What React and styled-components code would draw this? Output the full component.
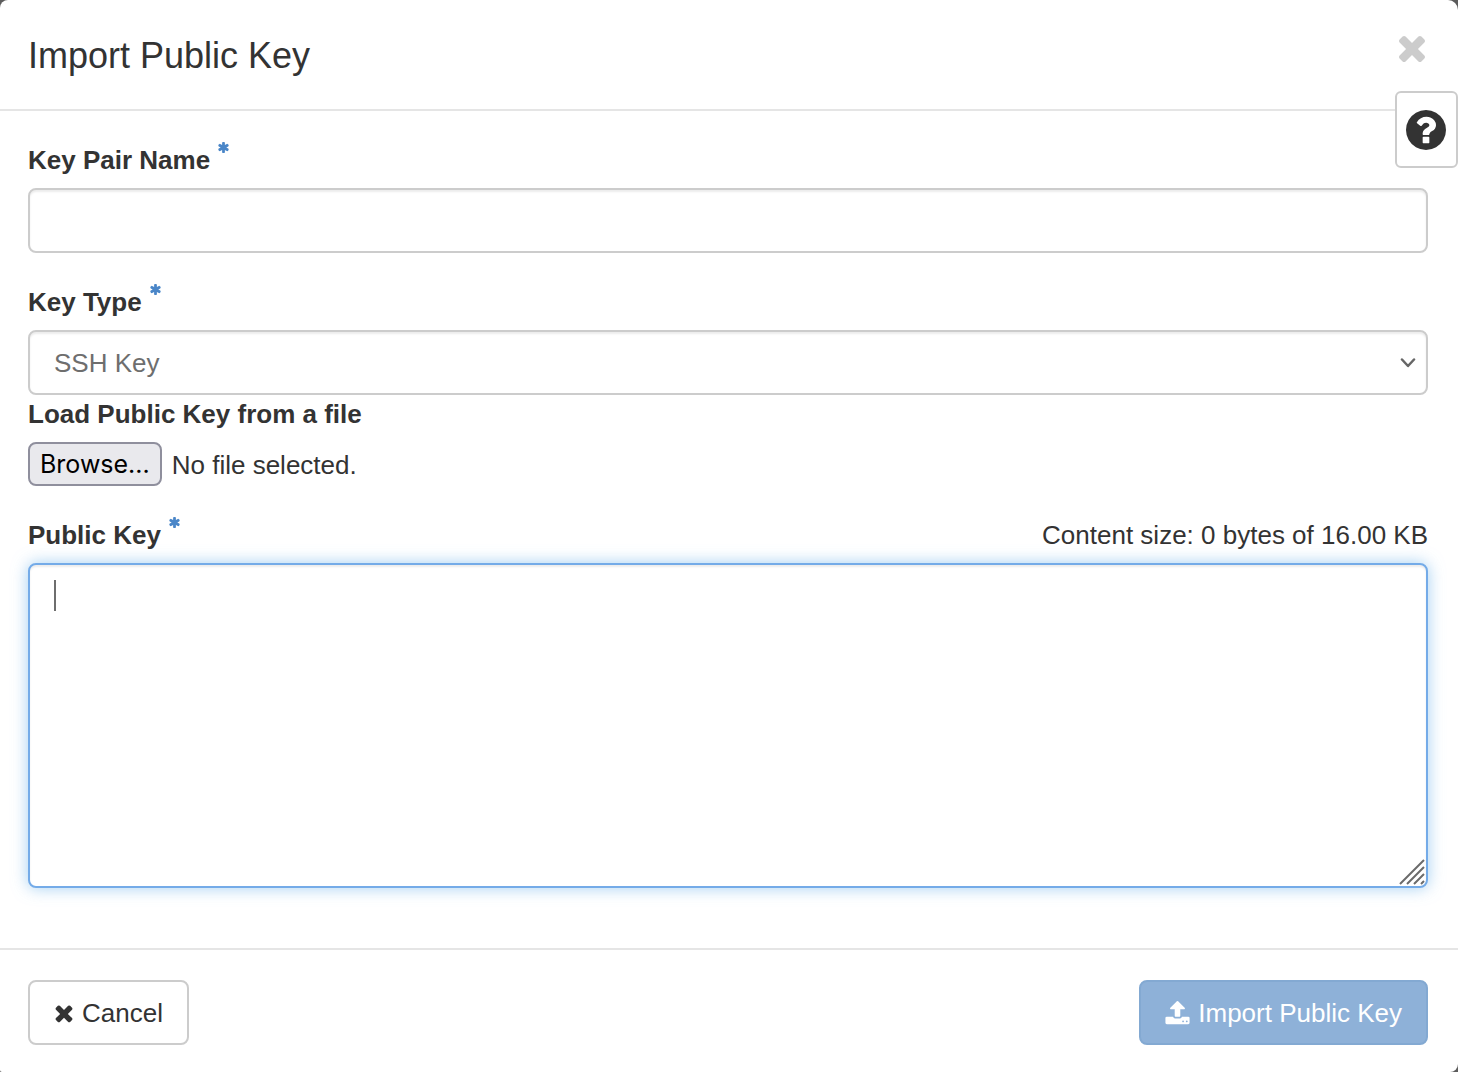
import { useState } from "react";
import styled, { createGlobalStyle } from "styled-components";

const icons = {
  times: {
    viewBox: "192 0 1408 1792",
    d: "M1490 1322q0 40-28 68l-136 136q-28 28-68 28t-68-28l-294-294-294 294q-28 28-68 28t-68-28l-136-136q-28-28-28-68t28-68l294-294-294-294q-28-28-28-68t28-68l136-136q28-28 68-28t68 28l294 294 294-294q28-28 68-28t68 28l136 136q28 28 28 68t-28 68l-294 294 294 294q28 28 28 68z",
  },
  close: {
    viewBox: "302 366 1188 1188",
    d: "M1490 1322q0 40-28 68l-136 136q-28 28-68 28t-68-28l-294-294-294 294q-28 28-68 28t-68-28l-136-136q-28-28-28-68t28-68l294-294-294-294q-28-28-28-68t28-68l136-136q28-28 68-28t68 28l294 294 294-294q28-28 68-28t68 28l136 136q28 28 28 68t-28 68l-294 294 294 294q28 28 28 68z",
  },
  upload: {
    viewBox: "64 0 1664 1792",
    d: "M1344 1472q0-26-19-45t-45-19-45 19-19 45 19 45 45 19 45-19 19-45zm256 0q0-26-19-45t-45-19-45 19-19 45 19 45 45 19 45-19 19-45zm128-224v320q0 40-28 68t-68 28h-1472q-40 0-68-28t-28-68v-320q0-40 28-68t68-28h427q21 56 70.5 92t110.5 36h256q61 0 110.5-36t70.5-92h427q40 0 68 28t28 68zm-325-648q-17 40-59 40h-256v448q0 26-19 45t-45 19h-256q-26 0-45-19t-19-45v-448h-256q-42 0-59-40-17-39 14-69l448-448q18-19 45-19t45 19l448 448q31 30 14 69z",
  },
  question: {
    viewBox: "128 128 1536 1536",
    d: "M1024 1376v-192q0-14-9-23t-23-9h-192q-14 0-23 9t-9 23v192q0 14 9 23t23 9h192q14 0 23-9t9-23zm256-672q0-88-55.5-163t-138.5-116-170-41q-243 0-371 213-15 24 8 42l132 100q7 6 19 6 16 0 25-12 53-68 86-92 34-24 86-24 48 0 85.5 26t37.5 59q0 38-20 61t-68 45q-63 28-115.5 86.5t-52.5 125.5v36q0 14 9 23t23 9h192q14 0 23-9t9-23q0-19 21.5-49.5t54.5-49.5q32-18 49-28.5t46-35 44.5-48 28-60.5 12.5-81zm384 192q0 209-103 385.5t-279.5 279.5-385.5 103-385.5-103-279.5-279.5-103-385.5 103-385.5 279.5-279.5 385.5-103 385.5 103 279.5 279.5 103 385.5z",
  },
  asterisk: {
    viewBox: "0 0 1792 1792",
    d: "M1546 1050q46 26 59.5 77.5t-12.5 97.5l-64 110q-26 46-77.5 59.5t-97.5-12.5l-266-153v307q0 52-38 90t-90 38h-128q-52 0-90-38t-38-90v-307l-266 153q-46 26-97.5 12.5t-77.5-59.5l-64-110q-26-46-12.5-97.5t59.5-77.5l266-154-266-154q-46-26-59.5-77.5t12.5-97.5l64-110q26-46 77.5-59.5t97.5 12.5l266 153v-307q0-52 38-90t90-38h128q52 0 90 38t38 90v307l266-153q46-26 97.5-12.5t77.5 59.5l64 110q26 46 12.5 97.5t-59.5 77.5l-266 154z",
  },
};

function Icon({ name, width, height }) {
  return (
    <svg
      width={width}
      height={height || width}
      viewBox={icons[name].viewBox}
      fill="currentColor"
      aria-hidden="true"
    >
      <path d={icons[name].d} />
    </svg>
  );
}

function RequiredLabel({ htmlFor, children }) {
  return (
    <Label htmlFor={htmlFor}>
      {children}
      <Required>
        <Icon name="asterisk" width={13} />
      </Required>
    </Label>
  );
}

export default function App() {
  const [name, setName] = useState("");
  const [publicKey, setPublicKey] = useState("");
  const [fileName, setFileName] = useState("");

  const loadFile = (e) => {
    const file = e.target.files[0];
    if (!file) return;
    setFileName(file.name);
    file.text().then(setPublicKey);
  };

  return (
    <>
      <GlobalStyle />
      <Modal role="dialog" aria-labelledby="modal-title">
        <Header>
          <Title id="modal-title">Import Public Key</Title>
          <CloseButton type="button" aria-label="Close">
            <Icon name="close" width={26} />
          </CloseButton>
        </Header>
        <HelpButton type="button" aria-label="Help">
          <Icon name="question" width={40} />
        </HelpButton>

        <Body>
          <Field>
            <RequiredLabel htmlFor="name">Key Pair Name</RequiredLabel>
            <Input
              id="name"
              type="text"
              value={name}
              onChange={(e) => setName(e.target.value)}
            />
          </Field>

          <Field $flush>
            <RequiredLabel htmlFor="key-type">Key Type</RequiredLabel>
            <SelectWrap>
              <Select id="key-type" defaultValue="ssh">
                <option value="ssh">SSH Key</option>
                <option value="x509">X509 Certificate</option>
              </Select>
              <Chevron width="16" height="10" viewBox="0 0 16 10" aria-hidden="true">
                <path d="M2 1.5l6 6.5 6-6.5" />
              </Chevron>
            </SelectWrap>
          </Field>

          <Field>
            <Label htmlFor="key-file">Load Public Key from a file</Label>
            <FileRow>
              <FileInput id="key-file" type="file" onChange={loadFile} />
              <Browse>Browse...</Browse>
              <FileName>{fileName || "No file selected."}</FileName>
            </FileRow>
          </Field>

          <Field>
            <LabelRow>
              <RequiredLabel htmlFor="public-key">Public Key</RequiredLabel>
              <span>Content size: {publicKey.length} bytes of 16.00 KB</span>
            </LabelRow>
            <TextareaWrap>
              <Textarea
                id="public-key"
                value={publicKey}
                onChange={(e) => setPublicKey(e.target.value)}
              />
              {!publicKey && <Caret />}
              <Grip width="26" height="26" viewBox="0 0 26 26" aria-hidden="true">
                <path d="M1 25L25 1M8 25L25 8M15 25L25 15M22 25L25 22" />
              </Grip>
            </TextareaWrap>
          </Field>
        </Body>

        <Footer>
          <Button type="button">
            <Icon name="times" width={20} height={26} />
            Cancel
          </Button>
          <Button type="submit" $primary disabled>
            <Icon name="upload" width={25} height={26} />
            Import Public Key
          </Button>
        </Footer>
      </Modal>
    </>
  );
}

const GlobalStyle = createGlobalStyle`
  * {
    box-sizing: border-box;
  }
  body {
    margin: 0;
    background: #5c5c5c;
    color: #333;
    font-family: "Helvetica Neue", Helvetica, "Liberation Sans", Arial, sans-serif;
    font-size: 26px;
    line-height: 39px;
  }
  input, select, textarea, button {
    font: inherit;
  }
  svg {
    display: block;
    flex: none;
  }
`;

const Modal = styled.div`
  position: relative;
  background: white;
  border-radius: 8px 10px 8px 2px;
`;

const Header = styled.header`
  display: flex;
  justify-content: space-between;
  align-items: flex-start;
  padding: 30px 30px 28px 28px;
  border-bottom: 2px solid #e5e5e5;
`;

const Title = styled.h3`
  margin: 0;
  font-size: 36px;
  font-weight: 500;
  line-height: 51px;
`;

const CloseButton = styled.button`
  padding: 0 3px 0 2px;
  margin-top: 6px;
  border: 0;
  background: none;
  color: #ccc;
  cursor: pointer;
`;

const HelpButton = styled.button`
  position: absolute;
  top: 91px;
  right: 0;
  padding: 17px 10px 16px 9px;
  background: white;
  color: #333;
  border: 2px solid #ccc;
  border-radius: 6px;
  cursor: pointer;
`;

const Body = styled.div`
  padding: 30px 30px 30px 28px;
`;

const Field = styled.div`
  margin-bottom: ${({ $flush }) => ($flush ? "0" : "30px")};
`;

const Label = styled.label`
  display: flex;
  align-items: flex-start;
  gap: 7px;
  margin-bottom: 8px;
  font-weight: bold;
`;

const LabelRow = styled.div`
  display: flex;
  justify-content: space-between;
`;

const Required = styled.span`
  color: #4a86c8;
`;

const Input = styled.input`
  display: block;
  width: 100%;
  height: 65px;
  padding: 12px 24px 10px;
  background: white;
  color: #6e6e6e;
  border: 2px solid #ccc;
  border-radius: 8px;
  outline: none;
  box-shadow: inset 0 2px 2px rgb(0 0 0 / 8%);
`;

const SelectWrap = styled.div`
  position: relative;
`;

const Select = styled(Input).attrs({ as: "select" })`
  appearance: none;
`;

const Chevron = styled.svg`
  position: absolute;
  right: 12px;
  top: 28px;
  fill: none;
  stroke: #666;
  stroke-width: 2.5;
  stroke-linecap: round;
  stroke-linejoin: round;
  pointer-events: none;
`;

const FileRow = styled.div`
  position: relative;
  display: flex;
  align-items: center;
  gap: 10px;
`;

const FileInput = styled.input`
  position: absolute;
  inset: 0;
  width: 100%;
  opacity: 0;
  cursor: pointer;
`;

const Browse = styled.span`
  padding: 1px 10px 0;
  background: #e9e9ed;
  color: black;
  border: 2px solid #8f8f9d;
  border-radius: 8px;
  font-family: Inter, sans-serif;
  font-size: 25px;
`;

const FileName = styled.span`
  padding-top: 2px;
`;

const TextareaWrap = styled.div`
  position: relative;
`;

const Textarea = styled(Input).attrs({ as: "textarea" })`
  height: 325px;
  border-color: #74abe8;
  resize: vertical;
  box-shadow: inset 0 2px 2px rgb(0 0 0 / 8%), 0 0 16px rgb(102 175 233 / 60%);
  &::-webkit-resizer {
    background: transparent;
  }
`;

const Caret = styled.span`
  position: absolute;
  left: 26px;
  top: 17px;
  width: 2px;
  height: 31px;
  background: #6e6e6e;
  pointer-events: none;
`;

const Grip = styled.svg`
  position: absolute;
  right: 3px;
  bottom: 3px;
  stroke: #6b6b6b;
  stroke-width: 2;
  pointer-events: none;
`;

const Footer = styled.footer`
  display: flex;
  justify-content: space-between;
  padding: 30px 30px 27px 28px;
  border-top: 2px solid #e5e5e5;
`;

const Button = styled.button`
  display: flex;
  align-items: center;
  gap: 8px;
  padding: 12px 24px 10px;
  background: ${({ $primary }) => ($primary ? "#8eb1d8" : "white")};
  color: ${({ $primary }) => ($primary ? "white" : "#333")};
  border: 2px solid ${({ $primary }) => ($primary ? "#83a9d2" : "#ccc")};
  border-radius: 8px;

  svg {
    margin-bottom: 2px;
  }
`;
